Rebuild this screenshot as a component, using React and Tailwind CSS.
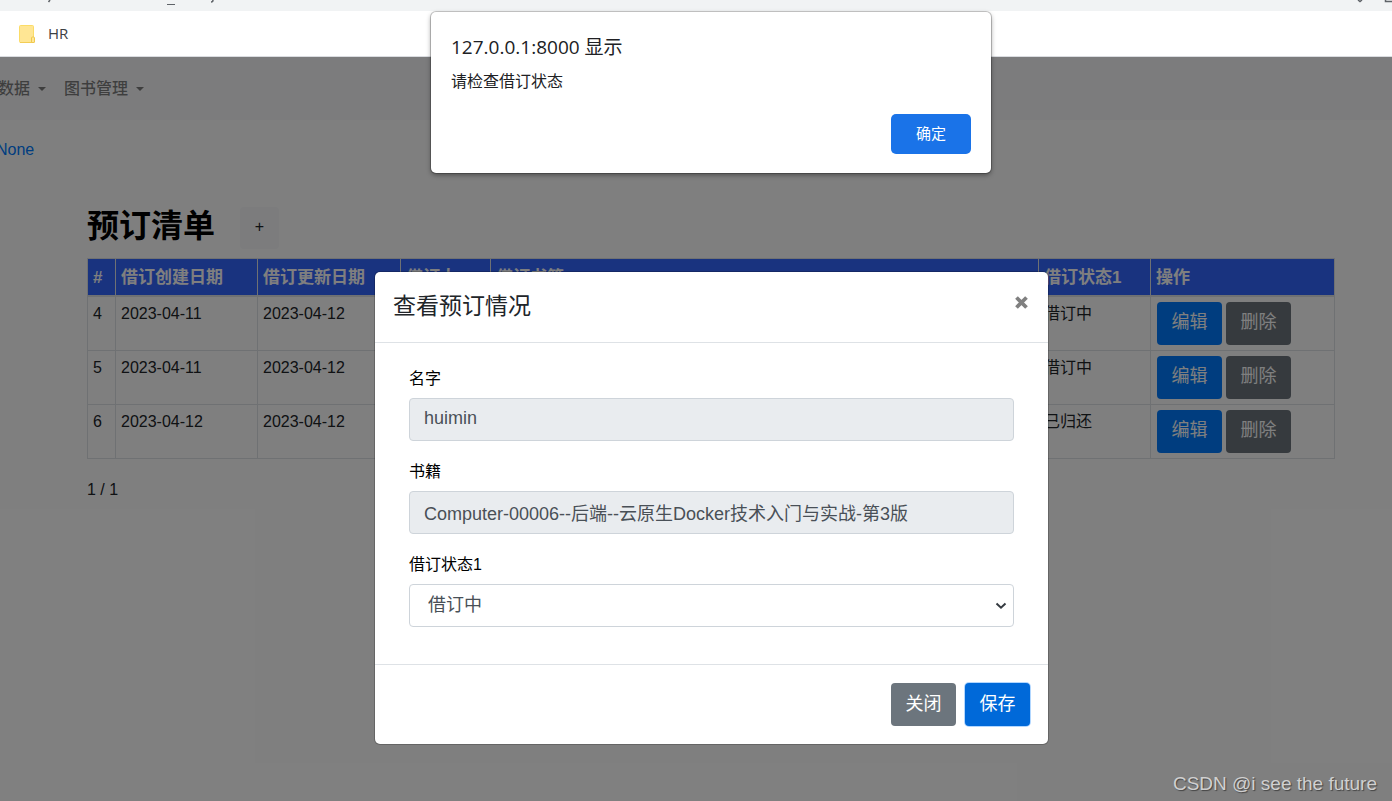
import React, { useState } from "react";
import clsx from "clsx";

const menus = ["数据", "图书管理"];

const columns = [
  { title: "#", width: "w-7" },
  { title: "借订创建日期", width: "w-[142px]" },
  { title: "借订更新日期", width: "w-[143px]" },
  { title: "借订人", width: "w-[90px]" },
  { title: "借订书籍", width: "" },
  { title: "借订状态1", width: "w-28" },
  { title: "操作", width: "w-[184px]" },
];

const bookings = [
  { id: 4, created: "2023-04-11", updated: "2023-04-12", status: "借订中" },
  { id: 5, created: "2023-04-11", updated: "2023-04-12", status: "借订中" },
  { id: 6, created: "2023-04-12", updated: "2023-04-12", status: "已归还" },
];

const Button = ({ className, children, ...rest }) => (
  <button
    type="button"
    className={clsx("h-[43px] min-w-[65px] rounded px-3 pb-0.5 text-lg text-white", className)}
    {...rest}
  >
    {children}
  </button>
);

const Field = ({ id, label, children }) => (
  <div className="mb-[19px]">
    <label htmlFor={id} className="mb-[7px] block text-base text-black">
      {label}
    </label>
    {children}
  </div>
);

const BrowserBar = () => (
  <header>
    <div className="flex h-[11px] justify-between overflow-hidden bg-[#f1f3f4]">
      <svg width="240" height="11" fill="none" stroke="#5f6368" aria-hidden="true">
        <path d="M50 0l-1.500 2M211 2q2 0 2-2" strokeWidth="1.500" />
        <path d="M167 4.500h8" />
      </svg>
      <svg width="40" height="11" fill="none" stroke="#5f6368" aria-hidden="true">
        <path d="M6 0l2 1.500l2-1.500" strokeWidth="1.500" />
        <path d="M33.500 0v1.500h7" strokeWidth="1.500" />
      </svg>
    </div>
    <div className="flex h-[46px] items-center border-b border-[#dadce0] bg-white pl-[19px]">
      <a href="#hr" className="flex items-center gap-3 font-['Open_Sans',sans-serif] text-[15px] text-[#3c4043]">
        <svg width="17" height="18" aria-hidden="true">
          <rect x="0.500" y="0.500" width="14" height="17" rx="1" fill="#ffe694" stroke="#fbdc67" />
          <path d="M1 17.500h13" stroke="#f3cd55" />
          <path d="M12.500 17.500v-4.500q0-1 1-1h1q1 0 1 1v4q0 .5-.5.5z" fill="#ffe694" stroke="#f0c94e" />
        </svg>
        HR
      </a>
    </div>
  </header>
);

const AlertBox = () => (
  <div className="pointer-events-none absolute inset-x-0 top-3 z-20 flex justify-center pl-[30px]">
    <div
      role="alertdialog"
      className="pointer-events-auto w-full max-w-[560px] rounded-[5px] bg-white px-5 pt-5 pb-[19px] text-[#202124] shadow-[0_0_0_1px_rgba(0,0,0,0.2),0_2px_5px_rgba(0,0,0,0.4)]"
    >
      <h2 className="font-['Open_Sans','Noto_Sans_CJK_SC',sans-serif] text-[19px] leading-[30px]">
        127.0.0.1:8000 显示
      </h2>
      <p className="mt-2 text-base leading-6">请检查借订状态</p>
      <div className="mt-5 flex justify-end">
        <button type="button" className="h-10 w-20 rounded-[5px] bg-[#1a73e8] text-[15px] text-white">
          确定
        </button>
      </div>
    </div>
  </div>
);

const BookingModal = () => {
  const [status, setStatus] = useState("借订中");

  return (
    <div
      role="dialog"
      className="w-full max-w-[673px] self-start rounded-[5px] bg-white shadow-[0_0_0_1px_rgba(0,0,0,0.2)]"
    >
      <div className="flex items-start justify-between border-b border-[#dee2e6] px-[18px] pt-[17px] pb-[19px]">
        <h5 className="text-[23px] leading-[34px] text-[#212529]">查看预订情况</h5>
        <button type="button" aria-label="关闭" className="mt-[5px] p-0.5 text-[#808080]">
          <svg width="13" height="13" viewBox="0 0 13 13" aria-hidden="true">
            <path d="M1.500 1.500l10 10M11.500 1.500l-10 10" stroke="currentColor" strokeWidth="3.800" />
          </svg>
        </button>
      </div>

      <div className="px-[34px] pt-6 pb-[18px]">
        <Field id="name" label="名字">
          <input
            id="name"
            disabled
            value="huimin"
            className="block h-[43px] w-full rounded border border-[#ced4da] bg-[#e9ecef] px-3.5 pb-0.5 text-lg text-[#495057]"
          />
        </Field>
        <Field id="book" label="书籍">
          <input
            id="book"
            disabled
            value="Computer-00006--后端--云原生Docker技术入门与实战-第3版"
            className="block h-[43px] w-full rounded border border-[#ced4da] bg-[#e9ecef] px-3.5 pb-0.5 text-lg text-[#495057]"
          />
        </Field>
        <Field id="status" label="借订状态1">
          <div className="relative">
            <select
              id="status"
              value={status}
              onChange={(e) => setStatus(e.target.value)}
              className="block h-[43px] w-full appearance-none rounded border border-[#ced4da] bg-white px-[18px] pb-0.5 text-lg text-[#495057]"
            >
              <option>借订中</option>
              <option>已归还</option>
            </select>
            <svg
              className="pointer-events-none absolute top-[18px] right-[7px]"
              width="12"
              height="8"
              fill="none"
              aria-hidden="true"
            >
              <path d="M1.500 1.500l4.500 4.200l4.500-4.200" stroke="#343a40" strokeWidth="2" />
            </svg>
          </div>
        </Field>
      </div>

      <div className="flex justify-end gap-[9px] border-t border-[#dee2e6] p-[18px]">
        <Button className="bg-[#6c757d]">关闭</Button>
        <Button className="bg-[#0069d9] shadow-[0_0_0_1px_rgba(0,123,255,0.3)]">保存</Button>
      </div>
    </div>
  );
};

const App = () => {
  return (
    <div className="relative flex min-h-screen flex-col overflow-hidden bg-white font-['Liberation_Sans','Noto_Sans_CJK_SC',sans-serif] text-base text-[#212529]">
      <BrowserBar />
      <AlertBox />

      <div className="relative flex-1">
        {/* Navbar */}
        <nav className="-ml-0.5 flex h-[63px] items-center gap-[18px] bg-[#f8f9fa] text-black/50">
          {menus.map((menu) => (
            <button key={menu} type="button" className="flex items-center gap-2 font-medium">
              {menu}
              <svg width="8" height="4" aria-hidden="true">
                <path d="M0 0h8l-4 4z" fill="currentColor" />
              </svg>
            </button>
          ))}
        </nav>
        <a href="#none" className="-ml-1 mt-[18px] block w-fit text-[#007bff]">
          None
        </a>

        {/* Booking list */}
        <main className="mt-[45px] pr-[57px] pl-[87px]">
          <div className="mb-[9px] flex items-center gap-[25px]">
            <h1 className="pb-1 text-[32px] leading-9 font-bold text-black">预订清单</h1>
            <button type="button" className="h-[42px] w-[39px] rounded bg-[#f8f9fa] pb-0.5 text-base">
              +
            </button>
          </div>

          <table className="w-full table-fixed border-collapse border border-[#dee2e6]">
            <thead>
              <tr className="h-[37px] bg-[#3366ff] text-left text-[17px] leading-6 text-white">
                {columns.map(({ title, width }) => (
                  <th key={title} className={clsx("border border-b-2 border-[#dee2e6] px-[5px] pt-0.5 whitespace-nowrap", width)}>
                    {title}
                  </th>
                ))}
              </tr>
            </thead>
            <tbody>
              {bookings.map(({ id, created, updated, status }) => (
                <tr key={id} className="align-top">
                  <td className="border border-[#dee2e6] p-[5px]">{id}</td>
                  <td className="border border-[#dee2e6] p-[5px]">{created}</td>
                  <td className="border border-[#dee2e6] p-[5px]">{updated}</td>
                  <td className="border border-[#dee2e6] p-[5px]"></td>
                  <td className="border border-[#dee2e6] p-[5px]"></td>
                  <td className="border border-[#dee2e6] p-[5px]">{status}</td>
                  <td className="border border-[#dee2e6] px-1.5 py-[5px]">
                    <div className="flex gap-1">
                      <Button className="bg-[#007bff]">编辑</Button>
                      <Button className="bg-[#6c757d]">删除</Button>
                    </div>
                  </td>
                </tr>
              ))}
            </tbody>
          </table>
          <p className="mt-[19px]">1 / 1</p>
        </main>

        {/* Modal over the dimmed page */}
        <div className="absolute inset-0 z-10 flex justify-center bg-black/50 pt-[215px] pl-[31px]">
          <BookingModal />
        </div>
      </div>

      <p className="absolute right-[15px] bottom-[3px] z-10 text-[19px] text-[#d0d0d0] [text-shadow:1px_1px_1px_#444]">
        CSDN @i see the future
      </p>
    </div>
  );
};

export default App;
